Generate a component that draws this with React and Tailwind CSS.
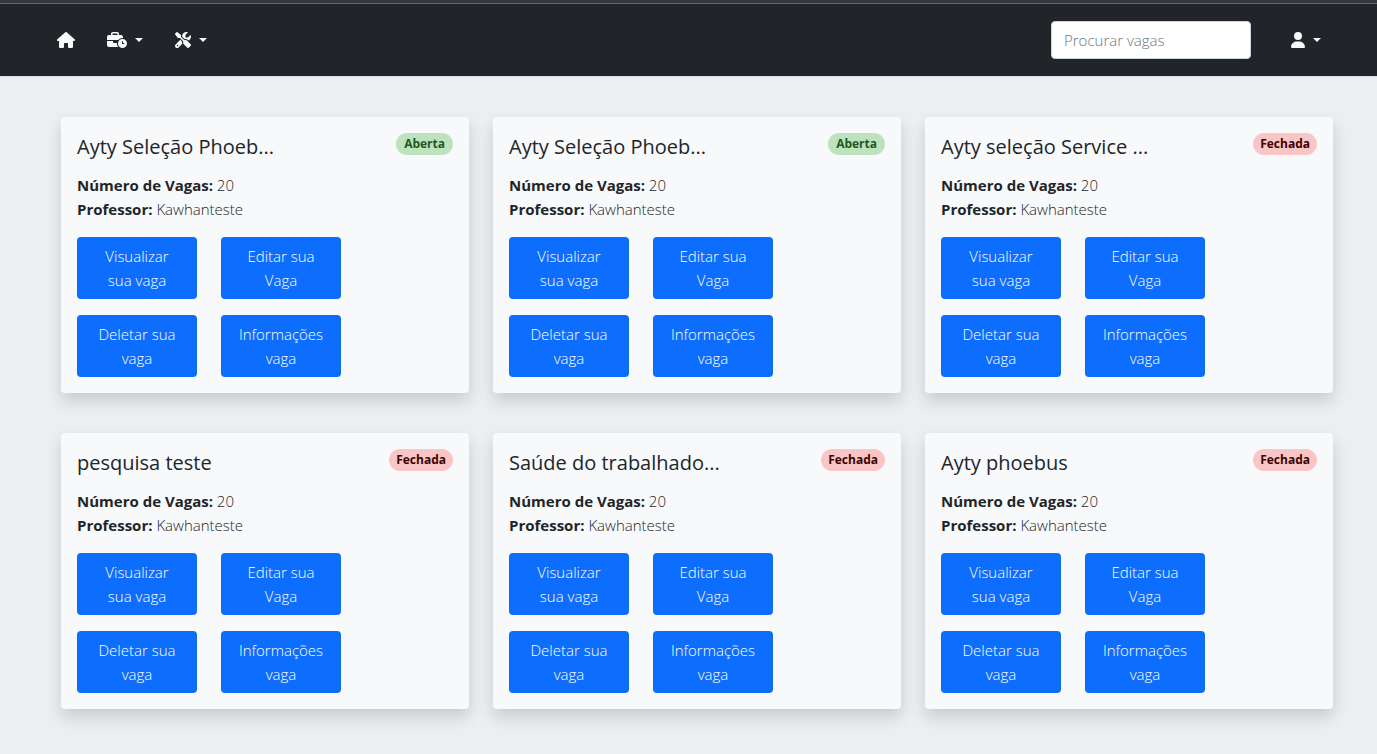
import React from "react";
import { FaHouse, FaBusinessTime, FaScrewdriverWrench, FaUser } from "react-icons/fa6";

const jobs = [
  { title: "Ayty Seleção Phoeb...", open: true },
  { title: "Ayty Seleção Phoeb...", open: true },
  { title: "Ayty seleção Service ...", open: false },
  { title: "pesquisa teste", open: false },
  { title: "Saúde do trabalhado...", open: false },
  { title: "Ayty phoebus", open: false },
];

const actions = ["Visualizar sua vaga", "Editar sua Vaga", "Deletar sua vaga", "Informações vaga"];

function Caret() {
  return <span className="border-x-4 border-t-4 border-x-transparent border-t-[#f8f9fa]" />;
}

function MenuButton({ label, children }) {
  return (
    <button type="button" aria-label={label} aria-haspopup="menu" className="flex items-center gap-2">
      {children}
      <Caret />
    </button>
  );
}

function Navbar() {
  return (
    <nav className="flex items-center justify-between border-t border-b border-t-[#66686a] border-b-[#dcdfe3] bg-[#212529] py-[17px] pr-14 pl-[57px] text-base text-[#f8f9fa]">
      <div className="flex items-center gap-8">
        <a href="#" aria-label="Início">
          <FaHouse className="h-4 w-[18px]" />
        </a>
        <MenuButton label="Vagas">
          <FaBusinessTime className="h-4 w-5" />
        </MenuButton>
        <MenuButton label="Ferramentas">
          <FaScrewdriverWrench className="h-4 w-4" />
        </MenuButton>
      </div>
      <div className="flex items-center gap-10">
        <input
          type="search"
          aria-label="Procurar vagas"
          placeholder="Procurar vagas"
          className="h-[38px] w-[200px] rounded border border-[#ced4da] bg-white px-3 text-[15px] font-light text-[#212529] placeholder:text-[#6c757d]"
        />
        <MenuButton label="Conta">
          <FaUser className="h-4 w-[14px]" />
        </MenuButton>
      </div>
    </nav>
  );
}

function JobCard({ job }) {
  return (
    <article className="rounded bg-[#f8f9fb] p-4 shadow-[0_8px_16px_rgba(0,0,0,0.15)]">
      <div className="mb-3 flex items-start justify-between">
        <h2 className="text-xl leading-7 font-medium">{job.title}</h2>
        <span
          className={
            job.open
              ? "rounded-full bg-[#bde2bd] px-2 text-[12px] leading-[22px] font-bold text-[#1e5a1e]"
              : "rounded-full bg-[#f8c6c6] px-[7px] text-[12px] leading-[22px] font-bold text-[#400000]"
          }
        >
          {job.open ? "Aberta" : "Fechada"}
        </span>
      </div>
      <p className="text-[15px] leading-6 font-light">
        <strong className="font-bold">Número de Vagas:</strong> 20
      </p>
      <p className="text-[15px] leading-6 font-light">
        <strong className="font-bold">Professor:</strong> Kawhanteste
      </p>
      <div className="mt-4 flex max-w-[264px] flex-wrap gap-x-6 gap-y-4">
        {actions.map((label) => (
          <button
            key={label}
            type="button"
            className="w-[120px] rounded bg-[#0d6efd] px-4 py-[7px] text-[15px] leading-6 font-light text-white"
          >
            {label}
          </button>
        ))}
      </div>
    </article>
  );
}

export default function App() {
  return (
    <div className="min-h-screen border-t-[3px] border-[#35363a] bg-[#ebeff0] font-['Open_Sans','Noto_Sans',sans-serif] text-[#212529]">
      <Navbar />
      <main className="grid grid-cols-3 gap-x-6 gap-y-10 pt-10 pr-11 pb-10 pl-[61px]">
        {jobs.map((job, i) => (
          <JobCard key={i} job={job} />
        ))}
      </main>
    </div>
  );
}
